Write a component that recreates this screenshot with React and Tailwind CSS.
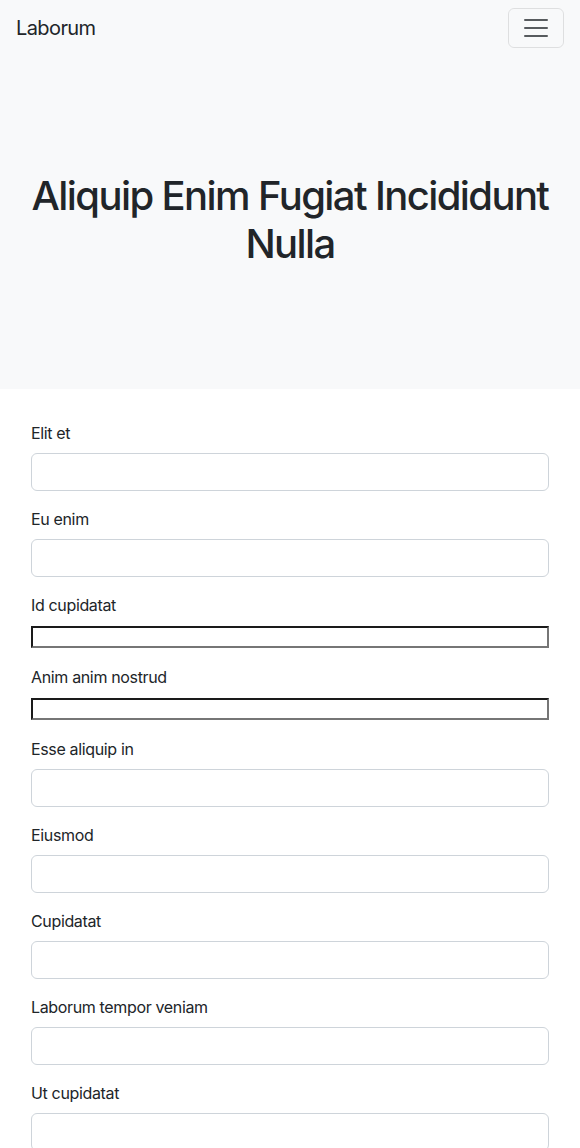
import React from 'react';

const fields = [
  { label: 'Elit et', kind: 'text' },
  { label: 'Eu enim', kind: 'text' },
  { label: 'Id cupidatat', kind: 'plain' },
  { label: 'Anim anim nostrud', kind: 'plain' },
  { label: 'Esse aliquip in', kind: 'text' },
  { label: 'Eiusmod', kind: 'text' },
  { label: 'Cupidatat', kind: 'text' },
  { label: 'Laborum tempor veniam', kind: 'text' },
  { label: 'Ut cupidatat', kind: 'text' },
];

function Field({ label, kind }) {
  return (
    <div className="mb-4">
      <label className="block mb-2 text-base leading-6 tracking-[-0.35px] text-[#212529]">{label}</label>
      {kind === 'plain' ? (
        <div className="py-px">
          <input
            type="text"
            className="block w-full h-[22px] border-2 border-t-[#1a1a1a] border-l-[#1a1a1a] border-b-[#767676] border-r-[#767676] bg-white outline-none"
          />
        </div>
      ) : (
        <input
          type="text"
          className="block w-full h-[38px] px-3 rounded-md border border-[#ced4da] bg-white text-base outline-none"
        />
      )}
    </div>
  );
}

export default function App() {
  return (
    <div className="min-h-screen bg-white text-[#212529]" style={{ fontFamily: 'Inter, "Noto Sans", sans-serif' }}>
      <div className="bg-[#f8f9fa]">
        <nav className="flex items-center justify-between px-4 py-2">
          <span className="text-xl leading-[30px] py-[5px] tracking-[-0.6px] text-[#212529]">Laborum</span>
          <button className="w-14 h-10 flex items-center justify-center rounded-md border border-[rgba(0,0,0,0.1)]">
            <svg width="30" height="30" viewBox="0 0 30 30">
              <path d="M4 7h22M4 15h22M4 23h22" stroke="rgba(33,37,41,0.75)" strokeWidth="2" strokeLinecap="round" />
            </svg>
          </button>
        </nav>
        <div className="pt-[116px] pb-[121px] px-[12px]">
          <h1 className="text-center text-[40px] leading-[48px] font-medium tracking-[-1.6px]">
            Aliquip Enim Fugiat Incididunt Nulla
          </h1>
        </div>
      </div>
      <form className="px-[31px] pt-8">
        {fields.map((f) => (
          <Field key={f.label} {...f} />
        ))}
      </form>
    </div>
  );
}
